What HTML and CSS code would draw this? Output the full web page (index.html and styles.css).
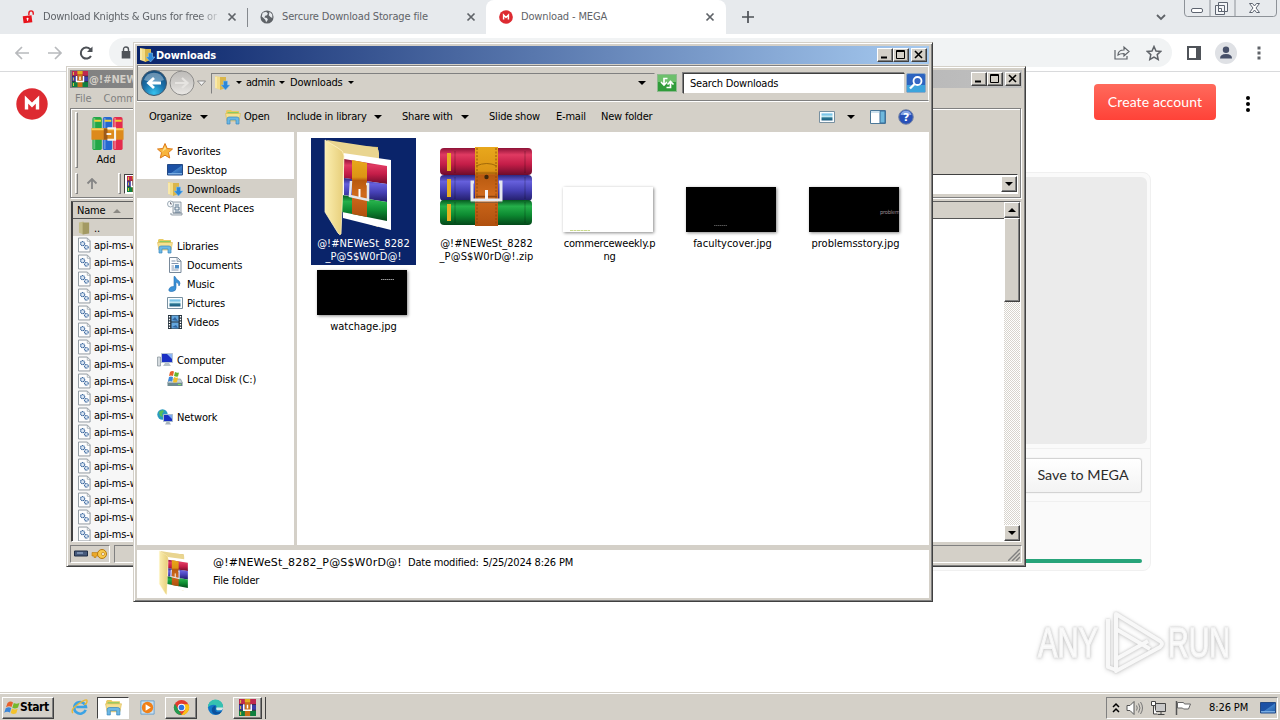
FILE: index.html
```html
<!DOCTYPE html>
<html lang="en">
<head>
<meta charset="utf-8">
<title>Desktop</title>
<link rel="stylesheet" href="styles.css">
</head>
<body>
<svg class="defs" aria-hidden="true">
  <defs>
    <linearGradient id="gRed" x2="0" y2="1"><stop offset="0" stop-color="#8d1237"/><stop offset=".25" stop-color="#e03a62"/><stop offset=".6" stop-color="#c41d48"/><stop offset="1" stop-color="#6e0c2b"/></linearGradient>
    <linearGradient id="gBlue" x2="0" y2="1"><stop offset="0" stop-color="#2c2780"/><stop offset=".25" stop-color="#6660dc"/><stop offset=".6" stop-color="#4540b4"/><stop offset="1" stop-color="#221d68"/></linearGradient>
    <linearGradient id="gGreen" x2="0" y2="1"><stop offset="0" stop-color="#055a20"/><stop offset=".25" stop-color="#25b04a"/><stop offset=".6" stop-color="#0d8a31"/><stop offset="1" stop-color="#04481a"/></linearGradient>
    <linearGradient id="gStrap" x2="0" y2="1"><stop offset="0" stop-color="#e8a81c"/><stop offset=".3" stop-color="#dc9414"/><stop offset=".36" stop-color="#b85a10"/><stop offset=".6" stop-color="#d06a1c"/><stop offset="1" stop-color="#b0500e"/></linearGradient>
    <linearGradient id="gFold" x2="1" y2="0"><stop offset="0" stop-color="#fbeeb0"/><stop offset="1" stop-color="#e6cd78"/></linearGradient>
    <radialGradient id="gBack" cx=".5" cy=".9" r=".9"><stop offset="0" stop-color="#36c2ee"/><stop offset=".5" stop-color="#1a6fa8"/><stop offset="1" stop-color="#164a78"/></radialGradient>
    <linearGradient id="gFwd" x2="0" y2="1"><stop offset="0" stop-color="#bdbbb8"/><stop offset=".5" stop-color="#d0cecb"/><stop offset="1" stop-color="#ebe9e6"/></linearGradient>
    <linearGradient id="gSky" x2="0" y2="1"><stop offset="0" stop-color="#58b4e4"/><stop offset=".5" stop-color="#d4f0f4"/><stop offset=".6" stop-color="#2a7894"/><stop offset="1" stop-color="#1d5c80"/></linearGradient>
    <linearGradient id="gScr" x2="1" y2="1"><stop offset="0" stop-color="#1a4fa8"/><stop offset=".5" stop-color="#1d52a4"/><stop offset=".55" stop-color="#3f7fc8"/><stop offset="1" stop-color="#1d55a0"/></linearGradient>
    <symbol id="rar" viewBox="0 0 92 80">
      <rect x="0" y="1" width="92" height="27" rx="4" fill="url(#gRed)"/>
      <rect x="0" y="28" width="92" height="26" rx="4" fill="url(#gBlue)"/>
      <rect x="0" y="53" width="92" height="25" rx="4" fill="url(#gGreen)"/>
      <path d="M7 6h4v18H7zM7 32h4v18H7zM7 57h4v17H7z" fill="#e8b020"/>
      <path d="M15 4v22M15 30v22M15 55v21M85 4v22M85 30v22M85 55v21" stroke="#000" stroke-opacity=".25"/>
      <path d="M35 0h23v79H35z" fill="url(#gStrap)"/>
      <path d="M37 1v77M56 1v77" stroke="#854008" stroke-width=".8" stroke-dasharray="2 1.5"/>
      <path d="M36 19q11-5 21 0M36 26h21" stroke="#a06808" fill="none"/>
      <circle cx="46.500" cy="30" r="2.200" fill="#40280c"/>
      <path d="M34 35h-2v18h29V35h-2" fill="none" stroke="#e6e8ee" stroke-width="3"/>
      <path d="M36 49.500h21" stroke="#8c4410" stroke-width="1.500"/>
      <path d="M46.500 43v9" stroke="#f4f4f8" stroke-width="3"/>
      <path d="M31 55.500h31" stroke="#555" stroke-opacity=".5"/>
    </symbol>
    <symbol id="rars" viewBox="0 0 16 16">
      <path d="M0 0h16v5.300H0z" fill="#c02850"/><path d="M0 5.300h16v5.300H0z" fill="#3c3ca8"/><path d="M0 10.600h16V16H0z" fill="#0f8040"/>
      <path d="M0 5.200h16M0 10.600h16" stroke="#30203c" stroke-width=".8"/><path d="M1.500 1v3M1.500 6.500v3M1.500 12v3" stroke="#d8c040" stroke-width="1"/>
      <path d="M5.500 0h5v16h-5z" fill="#c87018"/><path d="M5.500 0h5v3h-5z" fill="#e0b020"/>
      <path d="M4.500 5v5.500h7V5M8 5.500V9" stroke="#fff" stroke-width="1.400" fill="none"/>
    </symbol>
    <symbol id="bigfolder" viewBox="0 0 70 98">
      <path d="M22 7l32 2v80L22 78z" fill="#dcc376"/>
      <path d="M3 2l46 7q6 0 6 6v20H14z" fill="#e9d590"/>
      <path d="M19 15l48 7v70L19 80z" fill="#fff"/>
      <path d="M20 21l43 7v18l-43-6z" fill="url(#gRed)"/><path d="M20 40l43 6v18l-43-7z" fill="url(#gBlue)"/><path d="M18 57l45 7v19l-45-9z" fill="url(#gGreen)"/>
      <path d="M28 22l15 3v54l-15-3z" fill="url(#gStrap)"/>
      <path d="M27 43l-1 15 18 4V46h-2" fill="none" stroke="#e4e6ec" stroke-width="2.500"/><path d="M35.500 51v8" stroke="#fff" stroke-width="2"/>
      <path d="M1 2l13 8q6 3 6 8l-2 52-1 26q-1 2-3-1L1 74z" fill="url(#gFold)" stroke="#fff3c4" stroke-width=".8"/>
    </symbol>
    <symbol id="folderdl" viewBox="0 0 16 16">
      <path d="M1 1l6 1v13l-6-2z" fill="#f3dc88"/><path d="M6 2l6 0v11l-6 2z" fill="#dab64a"/><path d="M2 2v11" stroke="#fff5c8"/>
      <path d="M9.500 6h4v4H16l-4.500 5L7 10h2.500z" fill="#2c86d8" stroke="#7cc0f0" stroke-width=".6"/>
    </symbol>
    <symbol id="lib" viewBox="0 0 16 16">
      <path d="M1 4V2l1-1h4l1 1h7v3H1z" fill="#e8ca62"/><path d="M2.500 3h11v2h-11z" fill="#8ccc60"/><path d="M.5 4.500h15L14 12H2z" fill="#f7e190" stroke="#dcb850" stroke-width=".6"/>
      <path d="M2 15V10q0-2 2-2h8q2 0 2 2v5h-3v-4H5v4z" fill="#6cb8e4" stroke="#3b88be" stroke-width=".7"/>
    </symbol>
    <symbol id="star" viewBox="0 0 16 16"><path d="M8 .5l2.200 5 5.300.5-4 3.600 1.200 5.400L8 12.200 3.300 15l1.200-5.400L.5 6l5.300-.5z" fill="#f8b53c" stroke="#dd7a18"/><path d="M8 3l1.200 3.500H8L5 9" fill="#ffe390"/></symbol>
    <symbol id="desk" viewBox="0 0 16 16"><path d="M.5 2.500h15v10.500H.5z" fill="url(#gScr)" stroke="#244a84"/><path d="M1 11.700h14" stroke="#7eb0e4" stroke-width="1.300"/></symbol>
    <symbol id="recent" viewBox="0 0 16 16"><path d="M4 2h10v11h-8V4H4zM6 13h9v2H5q-2 0-1-2" fill="#e9eef2" stroke="#7d8c98" stroke-width=".8"/><path d="M8 5h4M8 7h4v3H8v-3M8 12h5" stroke="#5f7890" fill="none"/><circle cx="3.500" cy="4" r="3" fill="#f7fafc" stroke="#8898a4" stroke-width=".8"/><path d="M3.500 2.200V4H5" stroke="#445" fill="none" stroke-width=".7"/></symbol>
    <symbol id="doc" viewBox="0 0 16 16"><path d="M2.500.5h8l3.500 3.500v11.500H2.500z" fill="#fcfdff" stroke="#78899a"/><path d="M10 1v3.500h4" fill="#cfd9e2" stroke="#78899a" stroke-width=".7"/><path d="M4.500 4h4M4.500 6.500h7M4.500 9H7M4.500 11h3M4.500 13h7" stroke="#8496b0"/><path d="M8 8h4v3.500H8z" fill="#4a8cc8"/></symbol>
    <symbol id="music" viewBox="0 0 16 16"><path d="M8 .5q1 3 4 4.500 2 2 0 5 0-3-3-4v6q0 3-3.500 3.500Q1 16 2 13q1-3 5-2.500V.5z" fill="#3b92d8" stroke="#2670b4" stroke-width=".6"/></symbol>
    <symbol id="pic" viewBox="0 0 16 16"><path d="M.5 2.500h15v11H.5z" fill="#fafdff" stroke="#7890a0"/><path d="M2.500 4.500h11v7h-11z" fill="url(#gSky)"/></symbol>
    <symbol id="vid" viewBox="0 0 16 16"><path d="M1 1h14v14H1z" fill="#26333e"/><path d="M4.500 1.500h7v6h-7zM4.500 8.500h7v6h-7z" fill="#65a8de"/><path d="M5 6l3-3 3 4M5 13l4-2 2 3" fill="#2f64a0"/><path d="M2.500 2v12M13.500 2v12" stroke="#fff" stroke-width="1.300" stroke-dasharray="1.500 1.200"/></symbol>
    <symbol id="comp" viewBox="0 0 16 16"><path d="M.5 5h3v9h-3z" fill="#d4dade" stroke="#84909a" stroke-width=".7"/><path d="M4.500 1.500h11v9h-11z" fill="#1a30c4" stroke="#b7c4d4"/><path d="M10 2h5v5z" fill="#8bb4f4"/><path d="M8 11h4l2 3H6z" fill="#b7c2c9"/></symbol>
    <symbol id="disk" viewBox="0 0 16 16"><path d="M2.500 8h11l2 4H.5z" fill="#c8d4d8" stroke="#768690" stroke-width=".6"/><path d="M.5 12h15v3H.5z" fill="#6e8a90"/><path d="M11 13h3v1h-3z" fill="#7ee060"/><path d="M3 1q2-1.500 4-.5L6 5Q4 4 2 5z" fill="#e8612a"/><path d="M8 1q2 1 4 .4L11 5.500Q9 6 7 5z" fill="#68b42c"/><path d="M2 6q2-1 4 0l-1 4.500q-2-1-4 0z" fill="#3c88dc"/><path d="M7 6q2 1 4 .5L10 11q-2 1-4 .3z" fill="#f0c028"/></symbol>
    <symbol id="net" viewBox="0 0 16 16"><circle cx="5.500" cy="5.500" r="5.200" fill="#2a9cc0"/><path d="M2 3q3-3 5-1l-2 3 1 3-3-1zM8 5l3 1-2 4z" fill="#58bd58"/><path d="M6.500 5.500h9v7h-9z" fill="#1a30c4" stroke="#aabccc"/><path d="M11 6h4v4z" fill="#7aa8f0"/><path d="M9.500 13h3l1.500 2.500H8z" fill="#a8b4bc"/></symbol>
    <symbol id="dll" viewBox="0 0 14 16"><path d="M.5.500h9.500l3 3v12H.5z" fill="#fdfdfd" stroke="#8a949c"/><path d="M10 1v3h3" fill="none" stroke="#8a949c" stroke-width=".7"/><circle cx="5" cy="6.500" r="2.200" fill="#dbe7f4" stroke="#34629a" stroke-width="1.200" stroke-dasharray="1.200 .5"/><circle cx="9" cy="10.500" r="2" fill="#dbe7f4" stroke="#34629a" stroke-width="1.200" stroke-dasharray="1.200 .5"/></symbol>
    <symbol id="flag4" viewBox="0 0 16 16"><path d="M3.500 3q3-2.500 5.500-.5L7.500 7Q5 5.500 2 7.200z" fill="#e8602c"/><path d="M9.800 3q3 1.600 5.700-.2L14 7.500q-3 1.800-5.700.2z" fill="#76b82c"/><path d="M1.700 8.200q3-1.800 5.500-.3L6 12.500Q3 11 .2 12.800z" fill="#3b86d8"/><path d="M8 8.600q3 1.700 5.700.1L12.300 13.300q-3 1.700-5.600-.2z" fill="#f4c22c"/></symbol>
    <symbol id="mega" viewBox="0 0 32 32"><circle cx="16" cy="16" r="15.700" fill="#dd2a31"/><path d="M10.500 21.500v-10l5.500 5.500 5.500-5.500v10" fill="none" stroke="#fff" stroke-width="3.400"/></symbol>
    <symbol id="x" viewBox="0 0 10 10"><path d="M1.500 1.500l7 7M8.500 1.500l-7 7" stroke="currentColor" stroke-width="1.700"/></symbol>
  </defs>
</svg>

<main class="browser">
  <div class="tabs">
    <div class="tab first">
      <svg class="fav" viewBox="0 0 14 16"><path d="M1 7l10-1 1 8-10 1z" fill="#e8141c"/><path d="M8 6V4q0-3 2.500-3T13 4v1.500" fill="none" stroke="#e8141c" stroke-width="1.600"/><circle cx="6.500" cy="10" r="1.200" fill="#fff"/><path d="M6.500 10v2.500" stroke="#fff"/></svg>
      <span class="title fade">Download Knights &amp; Guns for free or</span>
      <svg class="close"><use href="#x"/></svg>
    </div>
    <i class="tabsep"></i>
    <div class="tab storage">
      <svg class="fav" viewBox="0 0 16 16"><circle cx="8" cy="8" r="7.500" fill="#5f6368"/><path d="M3 3l4-1 2 2-1 2-2 .5-1 2 3 .5 1 2-2 3-1-3-2-2-2-1.500zM11 2l3 3v4l-2-1-2-2z" fill="#e7eaed"/></svg>
      <span class="title">Sercure Download Storage file</span>
      <svg class="close"><use href="#x"/></svg>
    </div>
    <div class="tab active">
      <svg class="fav"><use href="#mega"/></svg>
      <span class="title">Download - MEGA</span>
      <svg class="close"><use href="#x"/></svg>
    </div>
    <svg class="plus" viewBox="0 0 12 12"><path d="M6 0v12M0 6h12" stroke="#4d5156" stroke-width="1.700"/></svg>
    <svg class="tabmenu" viewBox="0 0 10 7"><path d="M1 1l4 4 4-4" fill="none" stroke="#5f6368" stroke-width="1.800"/></svg>
    <svg class="chromewin" viewBox="0 0 94 18"><path d="M.5 0v13q0 3.500 3 3.500h86q3 0 3-3.500V0M26 0v16M51 0v16" fill="none" stroke="#8d9298"/><rect x="7.500" y="8.500" width="11" height="4" rx="1.500" fill="#fff" stroke="#5d6470"/><path d="M34.500 2.500h9v9h-9zM31.500 5.500h9v9h-9z" fill="#f3f5f7" stroke="#5d6470"/><path d="M34.500 8.500h3v3h-3z" fill="#fff" stroke="#5d6470"/><path d="M65.500 3.500h3l2 2.500 2-2.500h3l-3.500 4.500 3.500 4.500h-3l-2-2.500-2 2.500h-3l3.500-4.500z" fill="#fff" stroke="#5d6470"/></svg>
  </div>
  <div class="toolbar">
    <svg class="nav3" viewBox="0 0 80 18"><path d="M14 9H1M7 3L1 9l6 6M33 9h13M40 3l6 6-6 6" fill="none" stroke="#b8babd" stroke-width="1.700"/><path d="M76 12A5.500 5.500 0 1 1 75 5l1.500 1.700" fill="none" stroke="#4d5156" stroke-width="2"/><path d="M77.500 2.500v5.500h-5.500z" fill="#4d5156"/></svg>
    <div class="omnibox">
      <svg class="lock" viewBox="0 0 10 13"><path d="M.7 5h8.600v7.500H.7z" fill="#4f5358"/><path d="M2.500 5V3.500Q2.500 1 5 1t2.500 2.500V5" fill="none" stroke="#4f5358" stroke-width="1.400"/></svg>
      <svg class="share" viewBox="0 0 16 16"><path d="M1 5v9h12v-3M4 10q0-5 6-5V2l5 4.500-5 4.500V8.500q-4 0-6 1.500z" fill="none" stroke="#5f6368" stroke-width="1.200"/></svg>
      <svg class="bookmark" viewBox="0 0 16 16"><path d="M8 1.500l2 4.500 4.800.4-3.600 3.200 1 4.800L8 12l-4.200 2.400 1-4.800L1.200 6.400 6 6z" fill="none" stroke="#5f6368" stroke-width="1.500"/></svg>
    </div>
    <svg class="side" viewBox="0 0 14 14"><path d="M1 1h12v12H1z" fill="none" stroke="#4f5359" stroke-width="2"/><path d="M9 0h5v14H9z" fill="#4f5359"/></svg>
    <svg class="avatar" viewBox="0 0 22 22"><circle cx="11" cy="11" r="11" fill="#dfe1e5"/><circle cx="11" cy="7.800" r="3.200" fill="#475069"/><path d="M5 16.500q0-4.500 6-4.500t6 4.500z" fill="#475069"/></svg>
    <svg class="dots" viewBox="0 0 4 16"><path d="M.5 1.500h3v3h-3zM.5 6.500h3v3h-3zM.5 11.500h3v3h-3z" fill="#5f6368"/></svg>
  </div>
  <div class="page">
    <header>
      <svg class="megalogo"><use href="#mega"/></svg>
      <button class="create">Create account</button>
      <svg class="pagedots" viewBox="0 0 4 16"><circle cx="2" cy="2" r="2"/><circle cx="2" cy="8" r="2"/><circle cx="2" cy="14" r="2"/></svg>
    </header>
    <section class="card">
      <div class="preview"></div>
      <div class="saverow"><button class="save">Save to MEGA</button></div>
      <div class="progress"><i></i></div>
    </section>
  </div>
</main>

<section class="window rarwin">
  <div class="titlebar idle"><svg class="ti"><use href="#rars"/></svg><span>@!#NEWeSt_8282_P@S$W0rD@!.zip</span>
    <div class="ctl"><b><svg viewBox="0 0 12 11"><path d="M2 8.500h6" stroke="#000" stroke-width="2"/></svg></b><b><svg viewBox="0 0 12 11"><path d="M1.500 1.500h8v8h-8zM1 2.500h9" fill="none" stroke="#000"/></svg></b><b class="cx"><svg viewBox="0 0 12 11"><path d="M2 2l7 7M9 2L2 9" stroke="#000" stroke-width="1.600"/></svg></b></div>
  </div>
  <div class="menu"><span>File</span><span>Commands</span></div>
  <div class="rartools">
    <div class="bigtools"><i class="grip"></i>
      <div class="add"><svg viewBox="0 0 36 36"><rect x="2" width="10" height="35" rx="2" fill="#22a847"/><rect x="13" width="10" height="35" rx="2" fill="#2468d0"/><rect x="24" width="10" height="35" rx="2" fill="#e42b4c"/><path d="M4 1v33M15 1v33M26 1v33" stroke="#fff" stroke-opacity=".3" stroke-width="2"/><path d="M4 4h7M15 4h7M26 4h7" stroke="#f2d034" stroke-width="2"/><path d="M1 12h34v12H1z" fill="#dd8a1c"/><path d="M1 13h34" stroke="#f8cd58" stroke-width="2"/><path d="M14 12h4v12h-4z" fill="#9c5a1a"/><path d="M19 13v-1h7v12h-7v-1M17 18h5" fill="none" stroke="#f6f2ec" stroke-width="2.200"/></svg><span>Add</span></div>
    </div>
    <div class="pathrow"><i class="grip"></i><svg class="up" viewBox="0 0 12 12"><path d="M6 11V1M1.500 5.500L6 1l4.500 4.500" fill="none" stroke="#858585" stroke-width="1.800"/></svg><i class="grip"></i><div class="pathbox"><svg><use href="#rars"/></svg><b class="btn down"></b></div></div>
  </div>
  <div class="rarlist">
    <div class="rows">
      <div class="head">Name <i></i></div>
      <div class="row parent"><svg viewBox="0 0 14 16"><path d="M1 2l5-1v14l-5-2z" fill="#c4bd8a"/><path d="M5 2h7v12l-7 1z" fill="#a39a63"/></svg><span>..</span></div>
      <div class="row"><svg><use href="#dll"/></svg><span>api-ms-win</span></div><div class="row"><svg><use href="#dll"/></svg><span>api-ms-win</span></div><div class="row"><svg><use href="#dll"/></svg><span>api-ms-win</span></div><div class="row"><svg><use href="#dll"/></svg><span>api-ms-win</span></div><div class="row"><svg><use href="#dll"/></svg><span>api-ms-win</span></div><div class="row"><svg><use href="#dll"/></svg><span>api-ms-win</span></div><div class="row"><svg><use href="#dll"/></svg><span>api-ms-win</span></div><div class="row"><svg><use href="#dll"/></svg><span>api-ms-win</span></div><div class="row"><svg><use href="#dll"/></svg><span>api-ms-win</span></div><div class="row"><svg><use href="#dll"/></svg><span>api-ms-win</span></div><div class="row"><svg><use href="#dll"/></svg><span>api-ms-win</span></div><div class="row"><svg><use href="#dll"/></svg><span>api-ms-win</span></div><div class="row"><svg><use href="#dll"/></svg><span>api-ms-win</span></div><div class="row"><svg><use href="#dll"/></svg><span>api-ms-win</span></div><div class="row"><svg><use href="#dll"/></svg><span>api-ms-win</span></div><div class="row"><svg><use href="#dll"/></svg><span>api-ms-win</span></div><div class="row"><svg><use href="#dll"/></svg><span>api-ms-win</span></div><div class="row"><svg><use href="#dll"/></svg><span>api-ms-win</span></div>
    </div>
    <div class="scroll"><b class="btn upb"></b><b class="thumb"></b><i></i><b class="btn down"></b></div>
  </div>
  <div class="rarstatus"><div class="cell"><svg viewBox="0 0 34 14"><path d="M.5 4h13v5H.5z" fill="#465a7c" stroke="#1f2c44"/><path d="M3 6h6" stroke="#a8c0e0"/><path d="M18 5.500h8v3.500h-4v1.500h-2V9h-2z" fill="#eaa828" stroke="#b87810" stroke-width=".6"/><circle cx="28" cy="7" r="4.500" fill="#f8c848" stroke="#b87810"/><circle cx="29" cy="7" r="1.500" fill="#fff" stroke="#b87810" stroke-width=".7"/></svg></div><div class="cell fill"><svg class="size" viewBox="0 0 12 12"><path d="M0 12L12 0M4 12l8-8M8 12l4-4" stroke="#808080" stroke-width="1.500"/></svg></div></div>
</section>

<section class="window explorer">
  <div class="titlebar"><svg class="ti"><use href="#folderdl"/></svg><span>Downloads</span>
    <div class="ctl"><b><svg viewBox="0 0 12 11"><path d="M2 8.500h6" stroke="#000" stroke-width="2"/></svg></b><b><svg viewBox="0 0 12 11"><path d="M1.500 1.500h8v8h-8zM1 2.500h9" fill="none" stroke="#000"/></svg></b><b class="cx"><svg viewBox="0 0 12 11"><path d="M2 2l7 7M9 2L2 9" stroke="#000" stroke-width="1.600"/></svg></b></div>
  </div>
  <div class="navbar">
    <svg class="backfwd" viewBox="0 0 68 28"><path d="M14 1.500h28" stroke="#a8a5a0"/><circle cx="14" cy="14" r="12.500" fill="url(#gBack)" stroke="#43586c"/><path d="M4 11a10.500 10.500 0 0 1 20 0q-10 4-20 0z" fill="#fff" fill-opacity=".35"/><path d="M21 14H9M14 9l-5.500 5 5.500 5" fill="none" stroke="#fff" stroke-width="2.800"/><circle cx="42" cy="14" r="12" fill="url(#gFwd)" stroke="#8e8d8b"/><path d="M35 14h12M42 9l5.500 5-5.500 5" fill="none" stroke="#e6e4e1" stroke-width="2.200"/><path d="M57.500 12h8l-4 4.500z" fill="#f3f3f3" stroke="#777" stroke-width=".8"/></svg>
    <div class="address"><svg><use href="#folderdl"/></svg><i class="tri"></i><span class="adm">admin</span><i class="tri"></i><span class="dls">Downloads</span><i class="tri"></i><i class="tri end"></i></div>
    <svg class="refresh" viewBox="0 0 20 18"><rect x=".5" y=".5" width="19" height="17" fill="#309c3a" stroke="#8fba90"/><path d="M1 1h18v7H1z" fill="#6dc06c"/><path d="M10.500 4.500H7v6M4 8l3 3 3-3" fill="none" stroke="#fff" stroke-width="1.700"/><path d="M9.500 13.500H13.500v-5M10.500 10.500l3-3 3 3" fill="none" stroke="#fff" stroke-width="1.700"/></svg>
    <div class="search">Search Downloads</div>
    <svg class="mag" viewBox="0 0 20 20"><rect x=".5" y=".5" width="19" height="19" rx="1.500" fill="#2d64c0" stroke="#8da8c4"/><path d="M1 12h18v7H1z" fill="#3da4dc"/><circle cx="11.500" cy="8" r="4" fill="#3668c4" stroke="#fff" stroke-width="1.800"/><path d="M8.500 11L4 15.500" stroke="#fff" stroke-width="2.300"/></svg>
  </div>
  <div class="commands">
    <span class="c1">Organize</span><i class="tri t1"></i><svg class="openi"><use href="#lib"/></svg><span class="c2">Open</span><span class="c3">Include in library</span><i class="tri t2"></i><span class="c4">Share with</span><i class="tri t3"></i><span class="c5">Slide show</span><span class="c6">E-mail</span><span class="c7">New folder</span>
    <svg class="view"><use href="#pic"/></svg><i class="tri t4"></i><svg class="pane" viewBox="0 0 16 14"><path d="M.5.500h15v13H.5z" fill="#fff" stroke="#4c7898"/><path d="M10 1h5v12h-5z" fill="#6eb8dc" stroke="#386c98"/><path d="M1 2h9" stroke="#9cc4dc"/></svg><svg class="help" viewBox="0 0 16 16"><circle cx="8" cy="8" r="7.300" fill="#2850b8" stroke="#7886a4"/><path d="M2.500 6a5.700 5.700 0 0 1 11 0z" fill="#86a4e4"/><text x="8" y="12.300" text-anchor="middle" class="q">?</text></svg>
  </div>
  <div class="body">
    <nav>
      <div class="n g"><svg><use href="#star"/></svg><span>Favorites</span></div>
      <div class="n"><svg><use href="#desk"/></svg><span>Desktop</span></div>
      <div class="n sel"><svg><use href="#folderdl"/></svg><span>Downloads</span></div>
      <div class="n"><svg><use href="#recent"/></svg><span>Recent Places</span></div>
      <div class="n g gap"><svg><use href="#lib"/></svg><span>Libraries</span></div>
      <div class="n"><svg><use href="#doc"/></svg><span>Documents</span></div>
      <div class="n"><svg><use href="#music"/></svg><span>Music</span></div>
      <div class="n"><svg><use href="#pic"/></svg><span>Pictures</span></div>
      <div class="n"><svg><use href="#vid"/></svg><span>Videos</span></div>
      <div class="n g gap"><svg><use href="#comp"/></svg><span>Computer</span></div>
      <div class="n"><svg><use href="#disk"/></svg><span>Local Disk (C:)</span></div>
      <div class="n g gap"><svg><use href="#net"/></svg><span>Network</span></div>
    </nav>
    <div class="files">
      <div class="file picked"><div class="art"><svg class="fo"><use href="#bigfolder"/></svg></div><p class="wide">@!#NEWeSt_8282<br>_P@S$W0rD@!</p></div>
      <div class="file"><div class="art"><svg class="zip"><use href="#rar"/></svg></div><p class="wide">@!#NEWeSt_8282<br>_P@S$W0rD@!.zip</p></div>
      <div class="file"><div class="art"><div class="shot white"><svg viewBox="0 0 90 45"><path d="M7 43.500h20" stroke="#c9d98c" stroke-dasharray="3 .5"/></svg></div></div><p>commerceweekly.p<br>ng</p></div>
      <div class="file"><div class="art"><div class="shot"><svg viewBox="0 0 90 45"><path d="M28 38.500h13" stroke="#555" stroke-dasharray="1.500 .5"/></svg></div></div><p class="mid">facultycover.jpg</p></div>
      <div class="file"><div class="art"><div class="shot prob">problem</div></div><p class="mid">problemsstory.jpg</p></div>
      <div class="file"><div class="shot low"><svg viewBox="0 0 90 45"><path d="M64 9.500h13" stroke="#999" stroke-dasharray="1.500 .5"/></svg></div><p class="mid">watchage.jpg</p></div>
    </div>
  </div>
  <div class="details"><svg><use href="#bigfolder"/></svg><div><p><span class="name">@!#NEWeSt_8282_P@S$W0rD@!</span> <span class="mod">Date modified:</span> <span class="date">5/25/2024 8:26 PM</span></p><p>File folder</p></div></div>
</section>

<svg class="watermark" viewBox="0 0 206 72">
  <g class="wm"><text x="6" y="52" textLength="60" lengthAdjust="spacingAndGlyphs">ANY</text><text x="136" y="52" textLength="62" lengthAdjust="spacingAndGlyphs">RUN</text>
  <path class="play" d="M84 9l44 27q4 3 0 6L84 66zM76 14v48l8 3M84 24l34 20M84 54l32-18"/></g>
</svg>

<footer class="taskbar">
  <button class="start"><svg><use href="#flag4"/></svg>Start</button>
  <div class="task plain"><svg viewBox="0 0 18 18"><path d="M15.500 11.500a6.200 6.200 0 1 1 .3-3H5.500" fill="none" stroke="#3ba2e4" stroke-width="2.800"/><path d="M2 15Q-1 11 8 5t9-3-3 4" fill="none" stroke="#e8b838" stroke-width="1.500"/></svg></div>
  <div class="task pressed"><svg><use href="#lib"/></svg></div>
  <div class="task plain"><svg viewBox="0 0 18 18"><path d="M2 2h14v14H2z" fill="#c8dff0" stroke="#6aa0cc"/><circle cx="9" cy="9" r="6" fill="#f08018"/><path d="M7 5.500v7l5.500-3.500z" fill="#fff"/></svg></div>
  <div class="task raised"><svg viewBox="0 0 18 18"><circle cx="9" cy="9" r="8" fill="#e33b2e"/><path d="M2 5l4.500 7.500L9 17A8 8 0 0 1 2 5z" fill="#229b4f"/><path d="M9 17a8 8 0 0 0 7.300-11.500H9l4 6z" fill="#fbc117"/><circle cx="9" cy="9" r="4" fill="#fff"/><circle cx="9" cy="9" r="3" fill="#2f74e0"/></svg></div>
  <div class="task plain"><svg viewBox="0 0 18 18"><circle cx="9" cy="9" r="8" fill="#1377c8"/><path d="M1 9a8 8 0 0 1 16-1q0 4-5 4-3 0-2-2 1-4-3-4-4 0-6 3z" fill="#35c1b0"/><path d="M9 10q-1 6 7 3l-3 3Q6 18 5 12q0-4 4-5z" fill="#0c509c"/><path d="M11 12q-2-1-1-3h7q0 3-3 3z" fill="#d8e6e8"/></svg></div>
  <div class="task raised rarb"><svg><use href="#rars"/></svg></div>
  <div class="tray">
    <svg class="chev" viewBox="0 0 8 12"><path d="M1 5l3-3 3 3M1 10l3-3 3 3" fill="none" stroke="#000" stroke-width="1.500"/></svg>
    <svg viewBox="0 0 18 16"><path d="M1 5.500h3l4-4v13l-4-4H1z" fill="#fff" stroke="#555"/><path d="M10.500 5.500q1.500 2.500 0 5M12.500 3.500q3 4.500 0 9M14.500 2q4 6 0 12" fill="none" stroke="#777"/></svg>
    <svg viewBox="0 0 18 16"><path d="M5.500 3.500h10v8h-10zM7.500 14.500h7M11 12v2" fill="#c8c8c8" stroke="#444"/><path d="M1.500 1.500h4v4h-4zM3.500 6v8H7" fill="#fff" stroke="#444"/></svg>
    <svg viewBox="0 0 18 16"><path d="M2.500 1v14" stroke="#555" stroke-width="1.500"/><path d="M3.500 2.500h6l1 1.500h6l-2 5h-5l-1-1h-5z" fill="#fff" stroke="#666"/></svg>
    <span>8:26 PM</span>
    <svg class="show"><use href="#desk"/></svg>
  </div>
</footer>
</body>
</html>
```
FILE: styles.css
```css
* { box-sizing: border-box; }
body { margin: 0; width: 1280px; height: 720px; overflow: hidden; position: relative; background: #fff; font: 11px/13px "DejaVu Sans Condensed", "DejaVu Sans", sans-serif; font-stretch: condensed; letter-spacing: -.2px; color: #000; white-space: nowrap; }
svg { display: block; flex: none; }
p { margin: 0; }
button { font: inherit; letter-spacing: inherit; margin: 0; }
.defs { position: absolute; width: 0; height: 0; }

/* browser */
.browser { display: flex; flex-direction: column; height: 692px; }
.tabs { display: flex; height: 34px; background: #e7eaed; color: #5f6368; align-items: center; flex: none; }
.tab { display: flex; align-items: center; height: 34px; }
.tab .fav { width: 14px; height: 14px; margin-right: 8px; }
.tab .title { flex: 1; overflow: hidden; font-size: 11px; line-height: 16px; letter-spacing: -.15px; }
.tab .close { width: 10px; height: 10px; color: #5f6368; }
.first { width: 247px; padding: 0 10px 0 21px; }
.tab.first .title { flex: none; width: 176px; margin-right: 8px; letter-spacing: -.22px; }
.fade { -webkit-mask-image: linear-gradient(90deg, #000 88%, transparent 102%); mask-image: linear-gradient(90deg, #000 88%, transparent 102%); }
.tabsep { width: 1px; height: 19px; background: #85898e; }
.storage { width: 238px; padding: 0 10px 0 12px; }
.active { width: 240px; background: #fff; border-radius: 8px 8px 0 0; padding: 0 11px 0 13px; }
.plus { width: 12px; height: 12px; margin-left: 16px; }
.tabmenu { width: 10px; height: 7px; margin-left: auto; }
.chromewin { width: 94px; height: 18px; margin: 0 2px 0 18px; align-self: flex-start; }
.toolbar { display: flex; align-items: center; height: 38px; border-bottom: 1px solid #d9dadc; flex: none; padding-right: 19px; }
.nav3 { width: 80px; height: 18px; margin-left: 15px; }
.omnibox { display: flex; align-items: center; flex: 1; height: 29px; margin-left: 14px; border-radius: 15px; background: #f1f3f4; padding: 0 10px 0 12px; }
.lock { width: 10px; height: 13px; }
.share { width: 16px; height: 16px; margin-left: auto; }
.bookmark { width: 16px; height: 16px; margin-left: 16px; }
.side { width: 14px; height: 14px; margin-left: 15px; }
.avatar { width: 22px; height: 22px; margin-left: 14px; }
.dots { width: 4px; height: 16px; margin-left: 20px; }
.page { flex: 1; font-family: Lato, sans-serif; letter-spacing: 0; }
.page header { display: flex; align-items: center; height: 64px; padding: 0 30px 0 16px; }
.megalogo { width: 32px; height: 32px; }
.create { width: 122px; height: 36px; margin: -4px 30px 0 auto; border: 0; border-radius: 4px; background: linear-gradient(#ff6a5c, #ff4238); color: #fff; font-size: 14px; padding: 0 0 2px; letter-spacing: .1px; }
.pagedots { width: 4px; height: 16px; }
.card { width: 500px; height: 399px; margin: 36px 0 0 651px; border: 1px solid #f0f0f0; border-radius: 8px; background: #fafafa; }
.preview { height: 267px; margin: 4px 3px; border-radius: 6px; background: #ebebeb; }
.saverow { display: flex; justify-content: flex-end; align-items: center; height: 54px; padding-right: 8px; border: solid #f0f0f0; border-width: 1px 0; }
.save { width: 122px; height: 35px; border: 1px solid #d3d3d3; border-radius: 3px; background: linear-gradient(#fff, #f3f3f3); color: #2b2b2b; font-size: 14.300px; padding: 0 0 2px 4px; box-shadow: 0 0 1px #ccc; }
.progress { padding: 57px 8px 0; }
.progress i { display: block; height: 4px; border-radius: 2px; background: #27a47a; }

/* windows */
.window { position: absolute; display: flex; flex-direction: column; background: #d4d0c8; border: 1px solid; border-color: #d4d0c8 #404040 #404040 #d4d0c8; box-shadow: inset 1px 1px #fff, inset -1px -1px #808080; padding: 3px; }
.titlebar { display: flex; align-items: center; height: 18px; flex: none; background: linear-gradient(90deg, #0a246a, #a6caf0); color: #fff; font-weight: bold; padding: 0 2px; letter-spacing: -.1px; }
.titlebar.idle { background: linear-gradient(90deg, #808080, #c0c0c0); color: #d4d0c8; padding-right: 1px; }
.ti { width: 16px; height: 16px; margin-right: 1px; }
.ctl { display: flex; margin-left: auto; }
.ctl b, .btn, .thumb { background: #d4d0c8; border: 1px solid; border-color: #fff #404040 #404040 #fff; box-shadow: inset -1px -1px #808080; }
.ctl b { width: 16px; height: 14px; padding: 0 1px; }
.ctl svg { width: 12px; height: 11px; }
.cx { margin-left: 2px; }
.grip { width: 3px; border: 1px solid; border-color: #fff #808080 #808080 #fff; flex: none; }
.btn { width: 16px; height: 16px; display: flex; align-items: center; justify-content: center; flex: none; }
.btn::after { content: ""; border: 4px solid transparent; border-bottom: 0; border-top-color: #000; }
.upb::after { border: 4px solid transparent; border-top: 0; border-bottom-color: #000; }

.rarwin { left: 66px; top: 66px; width: 960px; height: 501px; }
.menu { display: flex; gap: 12px; height: 20px; align-items: center; color: #808080; padding-left: 5px; letter-spacing: 0; }
.rartools { height: 90px; border: 1px solid #808080; box-shadow: inset 1px 1px #fff, 1px 1px #fff; flex: none; margin-right: 1px; }
.bigtools { display: flex; height: 61px; padding: 3px 0 0 4px; }
.bigtools .grip { height: 56px; }
.add { width: 46px; display: flex; flex-direction: column; align-items: center; margin-left: 5px; padding-top: 5px; padding-left: 3px; gap: 2px; }
.add svg { width: 35px; height: 34px; }
.add span { margin-left: -3px; letter-spacing: 0; }
.pathrow { display: flex; align-items: center; height: 27px; padding: 0 2px 0 4px; }
.pathrow .grip { height: 21px; }
.up { width: 12px; height: 12px; margin: 0 20px 0 8px; }
.pathbox { display: flex; flex: 1; height: 20px; margin-left: 3px; background: #fff; border: 1px solid; border-color: #404040 #fff #fff #404040; align-items: center; }
.pathbox svg { width: 16px; height: 16px; margin: 0 auto 0 2px; }
.rarlist { display: flex; height: 341px; flex: none; margin: 3px 1px 0; border: 1px solid; border-color: #606060 #fff #fff #404040; box-shadow: inset 1px 0 #404040; padding-left: 1px; background: #fff; }
.rows { flex: 1; overflow: hidden; }
.head { height: 17px; display: flex; align-items: center; gap: 8px; padding-left: 4px; background: #d4d0c8; border-bottom: 1px solid #555; padding-top: 1px; }
.head i { border: 4px solid transparent; border-top: 0; border-bottom-color: #8b8984; }
.row { display: flex; align-items: center; gap: 3px; height: 17px; padding-left: 5px; width: 70px; background: #f7f7f7; }
.row svg { width: 13px; height: 16px; }
.row span, .n span { padding-top: 2px; }
.parent { background: #d4d0c8; }
.scroll { display: flex; flex-direction: column; width: 16px; background: repeating-conic-gradient(#fff 0 25%, #d8d4cd 0 50%) 0 0/2px 2px; }
.thumb { height: 84px; }
.scroll i { flex: 1; }
.rarstatus { display: flex; gap: 4px; margin-top: 3px; height: 18px; }
.cell { width: 40px; height: 18px; border: 1px solid; border-color: #808080 #fff #fff #808080; padding: 1px 3px; }
.cell > svg { width: 34px; height: 14px; }
.fill { flex: 1; display: flex; justify-content: flex-end; align-items: flex-end; padding: 0 1px 1px 0; }
.fill .size { width: 12px; height: 12px; }

.explorer { left: 133px; top: 42px; width: 800px; height: 560px; }
.explorer .titlebar { margin-bottom: 1px; }
.navbar { display: flex; align-items: center; height: 36px; flex: none; border: 1px solid #808080; border-right-color: #fff; box-shadow: inset 0 1px #fff, 0 1px #fff; }
.backfwd { width: 68px; height: 28px; margin-left: 2px; }
.address { display: flex; align-items: center; flex: 1; height: 21px; margin-left: 3px; border: 1px solid; border-color: #808080 #d4d0c8 #d4d0c8 #808080; padding: 0 0 1px 2px; }
.address svg { width: 16px; height: 16px; margin-right: 6px; }
.tri { border: 4px solid transparent; border-bottom: 0; border-top-color: #000; flex: none; }
.address .tri { border-width: 3px; border-bottom: 0; }
.adm { width: 29px; margin: 0 4px; letter-spacing: -.45px; }
.dls { width: 53px; margin: 0 5px; }
.address .end { margin: 0 8px 0 auto; border-width: 4px 4px 0; }
.refresh { width: 20px; height: 18px; margin-left: 2px; }
.search { width: 222px; height: 21px; margin: 0 1px 0 6px; background: #fff; border: 1px solid; border-color: #404040 #d4d0c8 #d4d0c8 #404040; box-shadow: -1px -1px #808080; padding: 3px 6px; }
.mag { width: 20px; height: 20px; margin-right: 2px; }
.commands { display: flex; align-items: center; height: 31px; flex: none; padding-left: 12px; }
.c1 { width: 47px; } .t1 { margin-left: 4px; }
.openi { width: 16px; height: 16px; margin: 0 3px 0 17px; }
.c2 { width: 43px; } .c3 { width: 83px; } .t2 { margin-left: 4px; }
.c4 { width: 56px; margin-left: 20px; } .t3 { margin-left: 3px; }
.c5 { width: 67px; margin-left: 20px; } .c6 { width: 45px; }
.view { width: 16px; height: 16px; margin-left: auto; }
.t4 { margin-left: 12px; } .pane { width: 16px; height: 14px; margin-left: 15px; } .help { width: 16px; height: 16px; margin: 0 15px 0 12px; }
.q { font: bold 11px "DejaVu Sans", sans-serif; fill: #fff; }
.body { display: flex; height: 413px; flex: none; background: #fff; }
nav { width: 160px; border-right: 3px solid #d4d0c8; padding-top: 9px; flex: none; }
.n { display: flex; align-items: center; height: 19px; padding-left: 30px; gap: 4px; letter-spacing: -.13px; }
.n svg { width: 16px; height: 16px; }
.g { padding-left: 20px; }
.gap { margin-top: 19px; }
.sel { background: #d4d0c8; margin-right: -1px; }
.files { display: grid; grid-template-columns: repeat(5, 105px); column-gap: 18px; grid-template-rows: 127px 70px; row-gap: 5px; padding: 6px 0 0 14px; align-content: start; }
.file { text-align: center; }
.file p { letter-spacing: -.2px; }
.file .mid { letter-spacing: 0; }
.file .wide { letter-spacing: .1px; }
.picked { background: #0a246a; color: #fff; }
.art { display: flex; align-items: flex-end; justify-content: center; height: 99px; padding-bottom: 4px; }
.fo { width: 70px; height: 98px; margin: 0 0 -3px -10px; }
.zip { width: 92px; height: 80px; margin: 0 2px 6px 0; }
.shot { width: 90px; height: 45px; margin: 0 3px 1px 0; background: #000; box-shadow: 1px 1px 3px #888; overflow: hidden; }
.white { background: #fff; }
.prob { color: #a09098; font-size: 5.500px; line-height: 50px; padding-left: 71px; text-align: left; letter-spacing: -.1px; }
.shot.low { margin: 0 0 5px 6px; }
.details { display: flex; margin-top: 5px; height: 49px; background: #fff; }
.details > svg { width: 34px; height: 45px; margin: 0 21px 0 21px; }
.details > div { padding-top: 4px; line-height: 18px; }
.details p { height: 18px; display: flex; gap: 4px; }
.name { width: 191px; font-family: "DejaVu Sans", sans-serif; font-stretch: normal; letter-spacing: .15px; }

.watermark { position: absolute; left: 1032px; top: 605px; width: 206px; height: 72px; overflow: visible; filter: drop-shadow(0 0 1px #c4c4c4) drop-shadow(0 1px 2px #ddd); }
.wm text { font: 42px "Liberation Sans", sans-serif; fill: #fbfbfb; stroke: #f6f6f6; stroke-width: 1.500; letter-spacing: 0; }
.play { fill: none; stroke: #f8f8f8; stroke-width: 4; stroke-linejoin: round; }

/* taskbar */
.taskbar { display: flex; align-items: center; height: 28px; background: #d4d0c8; border-top: 1px solid #d4d0c8; box-shadow: inset 0 1px #fff; padding: 2px 2px 0; }
.start, .raised { background: #d4d0c8; border: 1px solid; border-color: #fff #404040 #404040 #fff; box-shadow: inset -1px -1px #808080; }
.start { display: flex; align-items: center; gap: 0; width: 52px; height: 22px; padding: 0 1px; font-weight: bold; font-size: 12px; letter-spacing: -.4px; }
.start svg { width: 16px; height: 16px; }
.task { display: flex; align-items: center; justify-content: center; width: 32px; height: 22px; }
.task svg { width: 17px; height: 17px; }
.plain { width: 36px; }
.start + .plain { margin-left: 7px; }
.pressed { background: #fff; border: 1px solid; border-color: #404040 #fff #fff #404040; }
.rarb { width: 29px; position: relative; }
.rarb::after { content: ""; position: absolute; left: 28px; top: -1px; width: 3px; height: 22px; border-right: 1px solid #404040; }
.tray { display: flex; align-items: center; gap: 6px; margin-left: auto; width: 172px; height: 22px; border: 1px solid; border-color: #808080 #fff #fff #808080; padding: 0 0 0 5px; }
.tray svg { width: 18px; height: 16px; }
.tray .chev { width: 8px; height: 12px; }
.tray span { width: 42px; margin-left: 11px; letter-spacing: -.1px; }
.tray .show { width: 16px; margin-left: 3px; }
```
